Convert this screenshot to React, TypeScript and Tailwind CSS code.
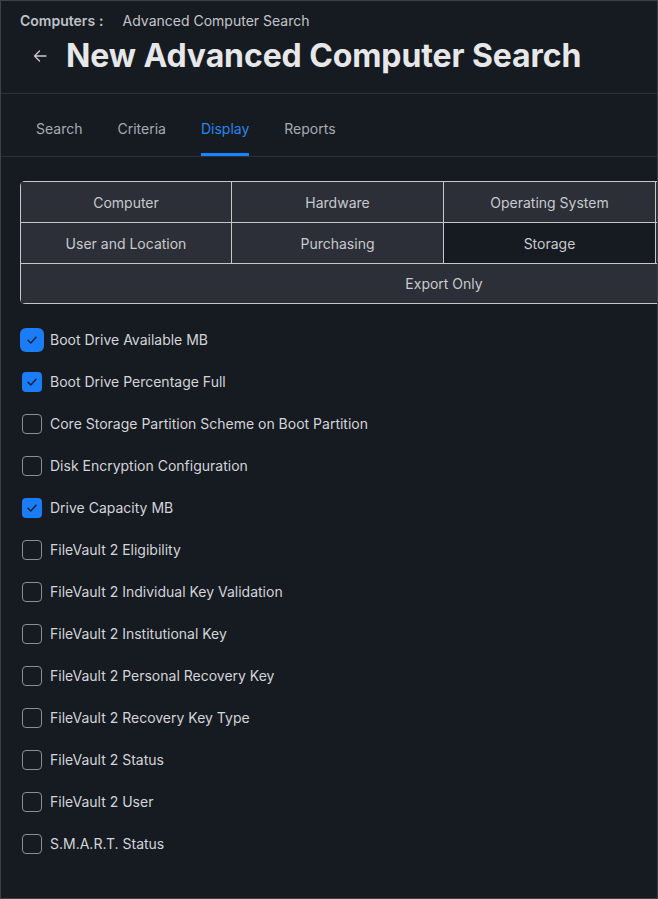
import React from "react";

const cells = [
  { label: "Computer" },
  { label: "Hardware" },
  { label: "Operating System" },
  { label: "" },
  { label: "User and Location" },
  { label: "Purchasing" },
  { label: "Storage", active: true },
  { label: "" },
];

const items: { label: string; checked?: boolean; focus?: boolean }[] = [
  { label: "Boot Drive Available MB", checked: true, focus: true },
  { label: "Boot Drive Percentage Full", checked: true },
  { label: "Core Storage Partition Scheme on Boot Partition" },
  { label: "Disk Encryption Configuration" },
  { label: "Drive Capacity MB", checked: true },
  { label: "FileVault 2 Eligibility" },
  { label: "FileVault 2 Individual Key Validation" },
  { label: "FileVault 2 Institutional Key" },
  { label: "FileVault 2 Personal Recovery Key" },
  { label: "FileVault 2 Recovery Key Type" },
  { label: "FileVault 2 Status" },
  { label: "FileVault 2 User" },
  { label: "S.M.A.R.T. Status" },
];

function Check({ checked, focus }: { checked?: boolean; focus?: boolean }) {
  if (checked) {
    return (
      <span
        className={
          "w-[20px] h-[20px] rounded-[4px] bg-[#1b7cf7] flex items-center justify-center shrink-0 " +
          (focus ? "ring-2 ring-[#1b7cf7]" : "")
        }
      >
        <svg width="12" height="12" viewBox="0 0 12 12" fill="none">
          <path d="M2 6.2 L4.8 9 L10 3.2" stroke="#142036" strokeWidth="1.4" strokeLinecap="round" strokeLinejoin="round" />
        </svg>
      </span>
    );
  }
  return <span className="w-[20px] h-[20px] rounded-[4px] border border-[#8b8e94] shrink-0" />;
}

export default function App() {
  return (
    <div className="w-[658px] h-[899px] border border-[#3d4047] bg-[#161a21] overflow-hidden font-['Inter',sans-serif] text-[14px]">
      <div className="pl-[19px] pt-[10px] pb-[14px] border-b border-[#2e3138]">
        <div className="flex items-center h-[20px] text-[14px] leading-[20px]">
          <span className="font-semibold text-[#bfc2c7]">Computers</span>
          <span className="font-semibold text-[#bfc2c7] ml-[4px]">:</span>
          <span className="text-[#c4c6cb] ml-[19px]">Advanced Computer Search</span>
        </div>
        <div className="flex items-center h-[46px] mt-[2px]">
          <svg width="16" height="16" viewBox="0 0 16 16" fill="none" className="ml-[12px]">
            <path d="M14 8 H2.5 M7.5 3 L2.5 8 L7.5 13" stroke="#c9cbd0" strokeWidth="1.3" strokeLinecap="round" strokeLinejoin="round" />
          </svg>
          <h1 className="ml-[18px] text-[32px] leading-[40px] font-bold text-[#e6e7e9] tracking-[-0.1px]">
            New Advanced Computer Search
          </h1>
        </div>
      </div>
      <div className="flex gap-[35px] pl-[35px] pt-[25px] border-b border-[#2e3138]">
        {["Search", "Criteria", "Display", "Reports"].map((t) => (
          <div
            key={t}
            className={
              "leading-[20px] pb-[14px] border-b-[3px] " +
              (t === "Display" ? "text-[#2b86ea] border-[#1683ff]" : "text-[#a7abb2] border-transparent")
            }
          >
            {t}
          </div>
        ))}
      </div>
      <div className="pl-[19px] pt-[24px]">
        <div className="w-[848px] bg-[#c6c7ca] p-px rounded-[5px] overflow-hidden grid grid-cols-[210px_211px_211px_211px] gap-px">
          {cells.map((c, i) => (
            <div
              key={i}
              className={
                "h-[40px] flex items-center justify-center text-[#c8cace] " +
                (c.active ? "bg-[#161a21]" : "bg-[#2c2f37]")
              }
            >
              {c.label}
            </div>
          ))}
          <div className="col-span-4 h-[39px] flex items-center justify-center bg-[#2c2f37] text-[#c8cace]">
            Export Only
          </div>
        </div>
        <div className="mt-[15px] flex flex-col">
          {items.map((it) => (
            <div key={it.label} className="h-[42px] flex items-center pl-[2px] gap-[8px]">
              <Check checked={it.checked} focus={it.focus} />
              <span className="text-[#d3d5d9] leading-[20px]">{it.label}</span>
            </div>
          ))}
        </div>
      </div>
    </div>
  );
}
